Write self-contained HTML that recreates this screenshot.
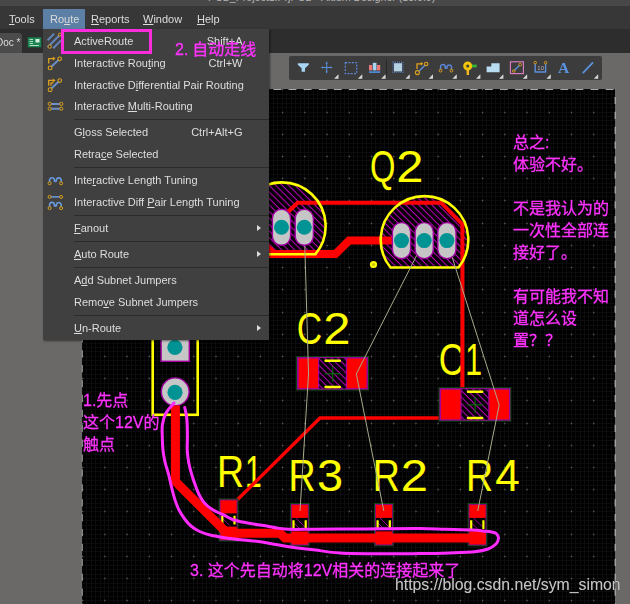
<!DOCTYPE html>
<html><head><meta charset="utf-8">
<style>
html,body{margin:0;padding:0;}
body{width:630px;height:604px;overflow:hidden;background:#6b6968;position:relative;font-family:"Liberation Sans","Noto Sans CJK SC",sans-serif;font-size:11px;color:#d8d8d8;}
.abs{position:absolute;}
#title{left:0;top:0;width:630px;height:6px;background:#484848;overflow:hidden;}
#menubar{left:0;top:6px;width:630px;height:23px;background:#373737;}
#tabbar{left:0;top:29px;width:630px;height:24px;background:#2d2d2d;}
.mb{will-change:transform;position:absolute;top:13px;height:12px;line-height:12px;font-size:11px;color:#dcdcdc;white-space:nowrap;}
.mb u,.mi u{text-decoration:underline;text-underline-offset:1px;}
#routehl{left:43px;top:9px;width:42px;height:20px;background:#5b7fa5;}
#menu{will-change:transform;left:43px;top:29px;width:225.500px;height:311px;background:#404040;box-shadow:1px 1px 2px rgba(0,0,0,.5);}
.mi{position:absolute;left:31px;height:14px;line-height:14px;font-size:11px;color:#dedede;white-space:nowrap;}
.sc{position:absolute;right:26px;height:14px;line-height:14px;font-size:11px;color:#dedede;white-space:nowrap;}
.sep{position:absolute;left:31px;width:195px;height:1px;background:#2b2b2b;}
.arr{position:absolute;left:214px;width:0;height:0;border-left:4px solid #ddd;border-top:3px solid transparent;border-bottom:3px solid transparent;}
.ann{position:absolute;color:#ff32ff;-webkit-text-stroke:0.300px #ff32ff;font-size:16px;line-height:22px;white-space:nowrap;font-family:"Liberation Sans","Noto Sans CJK SC",sans-serif;font-weight:400;will-change:transform;}
#wm{will-change:transform;position:absolute;left:395px;top:576px;font-size:15.800px;color:#c6c6c6;white-space:nowrap;font-family:"Liberation Sans",sans-serif;text-shadow:0 0 1px #333;}
</style></head><body>
<!-- PCB canvas -->
<svg class="abs" style="left:0;top:0" width="630" height="604" viewBox="0 0 630 604" xmlns="http://www.w3.org/2000/svg">
<defs>
<pattern id="hatch" width="4.6" height="4.6" patternUnits="userSpaceOnUse" patternTransform="rotate(45)"><rect width="4.6" height="4.6" fill="#000"/><rect x="0" y="0" width="4.6" height="1.1" fill="#b400b4"/></pattern>
<clipPath id="q2c"><path d="M390.5 267.5 A43.8 43.8 0 1 1 458.5 267.5 Z"/></clipPath>
<clipPath id="q1c"><path d="M248.1 254.2 A43.8 43.8 0 1 1 315.5 254.2 Z"/></clipPath>
</defs>
<rect x="82" y="89" width="533" height="515" fill="#000"/>
<path d="M82.5 89V604M86.5 89V604M91.5 89V604M95.5 89V604M100.5 89V604M104.5 89V604M108.5 89V604M113.5 89V604M117.5 89V604M122.5 89V604M126.5 89V604M131.5 89V604M135.5 89V604M140.5 89V604M144.5 89V604M148.5 89V604M153.5 89V604M157.5 89V604M162.5 89V604M166.5 89V604M171.5 89V604M175.5 89V604M180.5 89V604M184.5 89V604M188.5 89V604M193.5 89V604M197.5 89V604M202.5 89V604M206.5 89V604M211.5 89V604M215.5 89V604M220.5 89V604M224.5 89V604M228.5 89V604M233.5 89V604M237.5 89V604M242.5 89V604M246.5 89V604M251.5 89V604M255.5 89V604M260.5 89V604M264.5 89V604M268.5 89V604M273.5 89V604M277.5 89V604M282.5 89V604M286.5 89V604M291.5 89V604M295.5 89V604M300.5 89V604M304.5 89V604M308.5 89V604M313.5 89V604M317.5 89V604M322.5 89V604M326.5 89V604M331.5 89V604M335.5 89V604M340.5 89V604M344.5 89V604M348.5 89V604M353.5 89V604M357.5 89V604M362.5 89V604M366.5 89V604M371.5 89V604M375.5 89V604M380.5 89V604M384.5 89V604M388.5 89V604M393.5 89V604M397.5 89V604M402.5 89V604M406.5 89V604M411.5 89V604M415.5 89V604M420.5 89V604M424.5 89V604M428.5 89V604M433.5 89V604M437.5 89V604M442.5 89V604M446.5 89V604M451.5 89V604M455.5 89V604M460.5 89V604M464.5 89V604M468.5 89V604M473.5 89V604M477.5 89V604M482.5 89V604M486.5 89V604M491.5 89V604M495.5 89V604M500.5 89V604M504.5 89V604M508.5 89V604M513.5 89V604M517.5 89V604M522.5 89V604M526.5 89V604M531.5 89V604M535.5 89V604M540.5 89V604M544.5 89V604M548.5 89V604M553.5 89V604M557.5 89V604M562.5 89V604M566.5 89V604M571.5 89V604M575.5 89V604M580.5 89V604M584.5 89V604M588.5 89V604M593.5 89V604M597.5 89V604M602.5 89V604M606.5 89V604M611.5 89V604M82 89.5H615M82 94.5H615M82 98.5H615M82 103.5H615M82 107.5H615M82 112.5H615M82 116.5H615M82 120.5H615M82 125.5H615M82 129.5H615M82 134.5H615M82 138.5H615M82 143.5H615M82 147.5H615M82 152.5H615M82 156.5H615M82 160.5H615M82 165.5H615M82 169.5H615M82 174.5H615M82 178.5H615M82 183.5H615M82 187.5H615M82 192.5H615M82 196.5H615M82 200.5H615M82 205.5H615M82 209.5H615M82 214.5H615M82 218.5H615M82 223.5H615M82 227.5H615M82 232.5H615M82 236.5H615M82 240.5H615M82 245.5H615M82 249.5H615M82 254.5H615M82 258.5H615M82 263.5H615M82 267.5H615M82 272.5H615M82 276.5H615M82 280.5H615M82 285.5H615M82 289.5H615M82 294.5H615M82 298.5H615M82 303.5H615M82 307.5H615M82 312.5H615M82 316.5H615M82 320.5H615M82 325.5H615M82 329.5H615M82 334.5H615M82 338.5H615M82 343.5H615M82 347.5H615M82 351.5H615M82 356.5H615M82 360.5H615M82 365.5H615M82 369.5H615M82 374.5H615M82 378.5H615M82 383.5H615M82 387.5H615M82 391.5H615M82 396.5H615M82 400.5H615M82 405.5H615M82 409.5H615M82 414.5H615M82 418.5H615M82 423.5H615M82 427.5H615M82 431.5H615M82 436.5H615M82 440.5H615M82 445.5H615M82 449.5H615M82 454.5H615M82 458.5H615M82 463.5H615M82 467.5H615M82 471.5H615M82 476.5H615M82 480.5H615M82 485.5H615M82 489.5H615M82 494.5H615M82 498.5H615M82 503.5H615M82 507.5H615M82 511.5H615M82 516.5H615M82 520.5H615M82 525.5H615M82 529.5H615M82 534.5H615M82 538.5H615M82 543.5H615M82 547.5H615M82 551.5H615M82 556.5H615M82 560.5H615M82 565.5H615M82 569.5H615M82 574.5H615M82 578.5H615M82 583.5H615M82 587.5H615M82 591.5H615M82 596.5H615M82 600.5H615" stroke="#0c0c0e" stroke-width="1" fill="none" shape-rendering="crispEdges"/>
<path d="M82.0 89.5H615M82.0 112.5H615M82.0 134.5H615M82.0 156.5H615M82.0 178.5H615M82.0 200.5H615M82.0 223.5H615M82.0 245.5H615M82.0 267.5H615M82.0 289.5H615M82.0 312.5H615M82.0 334.5H615M82.0 356.5H615M82.0 378.5H615M82.0 400.5H615M82.0 423.5H615M82.0 445.5H615M82.0 467.5H615M82.0 489.5H615M82.0 511.5H615M82.0 534.5H615M82.0 556.5H615M82.0 578.5H615M82.0 600.5H615" stroke="#5c5c5c" stroke-width="1.300" stroke-dasharray="1.300 20.920" fill="none"/>
<path d="M82 89.500H615" stroke="#a8a8a8" stroke-width="1.200" stroke-dasharray="7.800 7.300" stroke-dashoffset="4.800" fill="none"/>
<path d="M615.200 89V604" stroke="#b0b0b0" stroke-width="1.200" stroke-dasharray="7.200 7.700" stroke-dashoffset="7" fill="none"/>
<path d="M82.300 89V604" stroke="#a0a0a0" stroke-width="1" stroke-dasharray="7.200 7.700" stroke-dashoffset="7" fill="none"/>

<!-- Q1 -->
<g clip-path="url(#q1c)"><rect x="230" y="180" width="100" height="80" fill="url(#hatch)"/></g>
<!-- Q2 -->
<g clip-path="url(#q2c)"><rect x="375" y="190" width="100" height="80" fill="url(#hatch)"/></g>

<!-- designators -->
<g fill="#ffff00" font-family="Liberation Sans, sans-serif" font-size="44.5">
<text transform="translate(370.05 182.3) scale(0.734 1)">Q</text>
<text transform="translate(396.34 182.3) scale(1.100 1)">2</text>
<text transform="translate(296.81 344.2) scale(0.791 1)">C</text>
<text transform="translate(323.34 344.2) scale(1.100 1)">2</text>
<text transform="translate(438.81 375.4) scale(0.791 1)">C</text>
<text transform="translate(465.30 375.4) scale(0.678 1)">1</text>
<text transform="translate(217.02 486.7) scale(0.844 1)">R</text>
<text transform="translate(244.90 486.7) scale(0.678 1)">1</text>
<text transform="translate(288.52 490.6) scale(0.844 1)">R</text>
<text transform="translate(317.01 490.6) scale(1.057 1)">3</text>
<text transform="translate(372.72 490.6) scale(0.844 1)">R</text>
<text transform="translate(400.64 490.6) scale(1.100 1)">2</text>
<text transform="translate(466.12 490.6) scale(0.844 1)">R</text>
<text transform="translate(495.19 490.6) scale(0.994 1)">4</text>
</g>
<!-- red traces -->
<g fill="none" stroke="#ff0000" stroke-linejoin="miter" stroke-linecap="butt">
<path d="M268 254H335.500L349.100 240.500H395" stroke-width="8"/>
<path d="M268 243.400L276 251H268Z" fill="#ff0000" stroke="none"/>
<path d="M286.500 213.500L297.500 202.700H441L462.400 224.300V389" stroke-width="4"/>
<path d="M442 418H320L229 508" stroke-width="3.4"/>
</g>

<!-- Q outlines -->
<path d="M390.5 267.5 A43.8 43.8 0 1 1 458.5 267.5 Z" fill="none" stroke="#ffff00" stroke-width="2.600"/>
<path d="M248.1 254.2 A43.8 43.8 0 1 1 315.5 254.2 Z" fill="none" stroke="#ffff00" stroke-width="2.600"/>
<circle cx="373.5" cy="264.5" r="3.6" fill="#ffff00"/><circle cx="373.5" cy="264.5" r="1.6" fill="#c8c800"/>

<!-- C2 -->
<g>
<rect x="296.1" y="356.1" width="72.800" height="34.400" fill="#0e4a0e"/>
<rect x="297.1" y="357.1" width="70.800" height="32.400" fill="#a000a0"/>
<rect x="319.2" y="358.1" width="26.600" height="30.400" fill="url(#hatch)"/>
<rect x="298.7" y="358.6" width="19.300" height="29.600" fill="#ff0000"/>
<rect x="347.0" y="358.6" width="19.500" height="29.600" fill="#ff0000"/>
<path d="M324.7 373.8H340.7M332.7 365.8V381.8" stroke="#007a00" stroke-width="1" fill="none"/>
<path d="M325.6 360.7H339.8M325.6 387.0H339.8" stroke="#ffff00" stroke-width="2.500" stroke-linecap="round" fill="none"/>
</g>
<!-- C1 -->
<g>
<rect x="438.5" y="387.2" width="72.800" height="34.400" fill="#0e4a0e"/>
<rect x="439.5" y="388.2" width="70.800" height="32.400" fill="#a000a0"/>
<rect x="461.6" y="389.2" width="26.600" height="30.400" fill="url(#hatch)"/>
<rect x="441.1" y="389.7" width="19.300" height="29.600" fill="#ff0000"/>
<rect x="489.4" y="389.7" width="19.500" height="29.600" fill="#ff0000"/>
<path d="M467.1 404.9H483.1M475.1 396.9V412.9" stroke="#007a00" stroke-width="1" fill="none"/>
<path d="M468.0 391.8H482.2M468.0 418.1H482.2" stroke="#ffff00" stroke-width="2.500" stroke-linecap="round" fill="none"/>
</g>
<!-- Resistors -->
<g>
<rect x="218.7" y="498.5" width="19.800" height="43.0" fill="#0e4a0e"/>
<rect x="219.7" y="499.5" width="17.800" height="41.0" fill="#8a008a"/>
<rect x="220.6" y="512.5" width="16" height="15.0" fill="#000"/>
<path d="M224.7 513.5L233.7 522.5M221.7 517.5L229.7 525.5" stroke="#a000a0" stroke-width="1" fill="none"/>
<rect x="220.6" y="500.4" width="16" height="13" fill="#ff0000"/>
<rect x="220.6" y="526.6" width="16" height="13" fill="#ff0000"/>
<path d="M222.3 515.8V524.5M234.5 515.8V524.5" stroke="#ffff00" stroke-width="2.200" fill="none"/>
<rect x="289.9" y="503.0" width="19.800" height="43.3" fill="#0e4a0e"/>
<rect x="290.9" y="504.0" width="17.800" height="41.3" fill="#8a008a"/>
<rect x="291.8" y="517.0" width="16" height="15.3" fill="#000"/>
<path d="M295.9 518.0L304.9 527.0M292.9 522.0L300.9 530.0" stroke="#a000a0" stroke-width="1" fill="none"/>
<rect x="291.8" y="504.9" width="16" height="13" fill="#ff0000"/>
<rect x="291.8" y="531.4" width="16" height="13" fill="#ff0000"/>
<path d="M293.5 520.3V529.0M305.7 520.3V529.0" stroke="#ffff00" stroke-width="2.200" fill="none"/>
<rect x="374.0" y="503.0" width="19.800" height="43.3" fill="#0e4a0e"/>
<rect x="375.0" y="504.0" width="17.800" height="41.3" fill="#8a008a"/>
<rect x="375.9" y="517.0" width="16" height="15.3" fill="#000"/>
<path d="M380.0 518.0L389.0 527.0M377.0 522.0L385.0 530.0" stroke="#a000a0" stroke-width="1" fill="none"/>
<rect x="375.9" y="504.9" width="16" height="13" fill="#ff0000"/>
<rect x="375.9" y="531.4" width="16" height="13" fill="#ff0000"/>
<path d="M377.6 520.3V529.0M389.8 520.3V529.0" stroke="#ffff00" stroke-width="2.200" fill="none"/>
<rect x="467.6" y="503.0" width="19.800" height="43.3" fill="#0e4a0e"/>
<rect x="468.6" y="504.0" width="17.800" height="41.3" fill="#8a008a"/>
<rect x="469.5" y="517.0" width="16" height="15.3" fill="#000"/>
<path d="M473.6 518.0L482.6 527.0M470.6 522.0L478.6 530.0" stroke="#a000a0" stroke-width="1" fill="none"/>
<rect x="469.5" y="504.9" width="16" height="13" fill="#ff0000"/>
<rect x="469.5" y="531.4" width="16" height="13" fill="#ff0000"/>
<path d="M471.2 520.3V529.0M483.4 520.3V529.0" stroke="#ffff00" stroke-width="2.200" fill="none"/>
</g>
<!-- ratsnest -->
<g fill="none" stroke="#aaaa8c" stroke-width="1">
<path d="M304.300 227.300L308.500 374L300 511"/>
<path d="M424.2 240.600L356.300 374L383.800 511"/>
<path d="M446.900 240.600L499.200 405L477.700 511"/>
</g>
<!-- pads Q2 -->
<g fill="#c6c6c6" stroke="#a000a0" stroke-width="1.400">
<rect x="392.40" y="222.60" width="18.200" height="36" rx="9.100"/>
<rect x="415.10" y="222.60" width="18.200" height="36" rx="9.100"/>
<rect x="437.80" y="222.60" width="18.200" height="36" rx="9.100"/>
<rect x="272.40" y="209.30" width="18.200" height="36" rx="9.100"/>
<rect x="295.20" y="209.30" width="18.200" height="36" rx="9.100"/>
</g>
<g fill="#009393">
<circle cx="401.5" cy="240.6" r="7.500"/><circle cx="424.2" cy="240.6" r="7.500"/><circle cx="446.9" cy="240.6" r="7.500"/><circle cx="281.5" cy="227.3" r="7.500"/><circle cx="304.3" cy="227.3" r="7.500"/>
</g>

<!-- J1 -->
<rect x="152.700" y="300" width="45" height="114.800" fill="none" stroke="#ffff00" stroke-width="2.600"/>
<rect x="161.100" y="333.100" width="28.200" height="28.200" fill="#c6c6c6" stroke="#a000a0" stroke-width="1.400"/>
<circle cx="174.900" cy="347.300" r="7.600" fill="#009393"/>
<circle cx="175.200" cy="391.800" r="13.900" fill="#c6c6c6" stroke="#a000a0" stroke-width="1.400"/>
<circle cx="175" cy="392.300" r="7.600" fill="#009393"/>

<path d="M175.400 405.500V481.500L227.200 533.300H280L285 538H486" stroke="#ff0000" stroke-width="9" fill="none" stroke-linejoin="miter"/>



<!-- hand drawn magenta -->
<path d="M174.0 403.0C172.7 404.7 167.9 409.4 166.0 413.0C164.1 416.6 163.0 420.8 162.4 424.8C161.8 428.8 162.2 432.9 162.3 437.0C162.4 441.1 162.5 445.4 162.9 449.6C163.3 453.8 164.1 457.9 165.0 462.0C165.9 466.1 167.5 470.2 168.6 474.4C169.7 478.6 170.5 482.9 171.5 487.0C172.5 491.1 173.6 495.5 174.8 499.3C176.1 503.1 177.3 506.7 179.0 510.0C180.7 513.3 182.7 516.3 184.7 519.0C186.7 521.7 188.5 523.9 191.0 526.0C193.5 528.1 196.3 530.0 199.6 531.5C202.9 533.0 206.9 534.3 211.0 535.3C215.1 536.3 219.1 536.9 224.4 537.7C229.7 538.5 236.7 539.3 243.0 540.0C249.3 540.7 256.5 541.2 262.0 542.0C267.5 542.8 271.5 543.7 276.0 544.5C280.5 545.3 284.7 546.0 289.0 546.7C293.3 547.4 297.6 548.0 302.0 548.5C306.4 549.0 309.2 549.2 315.5 550.0C321.8 550.8 329.2 552.4 340.0 553.0C350.8 553.6 366.7 553.7 380.0 553.8C393.3 553.9 408.3 553.7 420.0 553.6C431.7 553.5 440.9 553.3 450.0 553.0C459.1 552.7 468.4 552.5 474.7 551.8C481.0 551.1 484.4 550.3 488.0 549.0C491.6 547.7 494.2 545.8 496.0 544.0C497.8 542.2 498.4 539.7 498.5 538.0C498.6 536.3 497.4 534.8 496.5 533.8C495.6 532.8 495.1 532.7 492.8 532.2C490.6 531.7 486.5 531.4 483.0 531.0C479.5 530.6 478.0 530.3 471.7 530.0C465.4 529.7 453.6 529.4 445.0 529.2C436.4 529.0 430.8 528.7 420.0 528.6C409.2 528.5 393.3 528.7 380.0 528.8C366.7 528.9 351.3 528.9 340.0 529.0C328.7 529.1 320.5 529.2 312.0 529.3C303.5 529.3 294.8 529.5 289.0 529.3C283.2 529.1 280.7 528.5 277.0 528.0C273.3 527.5 270.9 526.7 266.7 526.0C262.5 525.3 256.8 524.6 252.0 523.8C247.2 523.0 241.4 521.9 237.8 521.0C234.2 520.1 232.7 519.4 230.5 518.5C228.3 517.6 226.5 516.4 224.4 515.4C222.3 514.4 220.1 513.5 218.0 512.5C215.9 511.5 213.8 510.4 212.0 509.2C210.2 508.0 208.4 506.8 207.0 505.5C205.6 504.2 204.6 503.5 203.3 501.7C202.0 499.9 200.2 497.0 199.0 494.5C197.8 492.0 197.0 489.7 195.9 486.8C194.8 483.9 193.5 480.3 192.5 477.0C191.5 473.7 190.4 470.2 189.7 467.0C188.9 463.8 188.4 460.9 188.0 458.0C187.6 455.1 187.3 453.1 187.2 449.6C187.1 446.1 187.4 441.1 187.4 437.0C187.4 432.9 187.3 428.3 187.2 424.8C187.0 421.3 186.9 418.9 186.5 416.0C186.1 413.1 185.0 408.8 184.7 407.4" fill="none" stroke="#ff2cff" stroke-width="3" stroke-linecap="round" stroke-linejoin="round"/>
</svg>

<!-- toolbar -->
<div class="abs" style="left:289px;top:56px;width:313px;height:23.500px;background:#3c3c3c;border-radius:2px;"></div>

<!-- annotations -->
<div class="ann" style="left:512.500px;top:132px;">总之:<br>体验不好。<br><br>不是我认为的<br>一次性全部连<br>接好了。<br><br>有可能我不知<br>道怎么设<br>置？？</div>
<div class="ann" style="left:83px;top:389.500px;">1.先点<br>这个12V的<br>触点</div>
<div class="ann" style="left:190px;top:560px;">3. 这个先自动将12V相关的连接起来了</div>
<div id="wm">https://blog.csdn.net/sym_simon</div>

<!-- chrome -->
<div id="title" class="abs"><div style="position:absolute;left:208px;top:-9px;font-size:10.600px;line-height:12px;color:#b4b4b4;white-space:nowrap;">PCB_Project1.PrjPCB - Altium Designer (18.0.9)</div></div>
<div id="menubar" class="abs"></div>
<div id="tabbar" class="abs"></div>
<div id="routehl" class="abs"></div>
<div class="mb" style="left:9px;"><u>T</u>ools</div>
<div class="mb" style="left:50px;">Ro<u>u</u>te</div>
<div class="mb" style="left:91px;"><u>R</u>eports</div>
<div class="mb" style="left:143px;"><u>W</u>indow</div>
<div class="mb" style="left:197px;"><u>H</u>elp</div>
<div class="abs" style="left:0;top:33px;width:22px;height:20px;background:#4b4b4b;border-radius:0 3px 0 0;"></div>
<div class="mb" style="left:-4px;top:37px;font-size:10px;">Doc *</div>

<div id="menu" class="abs">
<div class="mi" style="top:5px;">ActiveRoute</div><div class="sc" style="top:5px;">Shift+A</div>
<div class="mi" style="top:27px;">Interactive Rou<u>t</u>ing</div><div class="sc" style="top:27px;">Ctrl+W</div>
<div class="mi" style="top:49px;">Interactive D<u>i</u>fferential Pair Routing</div>
<div class="mi" style="top:70px;">Interactive <u>M</u>ulti-Routing</div>
<div class="sep" style="top:90px;"></div>
<div class="mi" style="top:96px;">G<u>l</u>oss Selected</div><div class="sc" style="top:96px;">Ctrl+Alt+G</div>
<div class="mi" style="top:118px;">Retra<u>c</u>e Selected</div>
<div class="sep" style="top:138px;"></div>
<div class="mi" style="top:144px;">Inte<u>r</u>active Length Tuning</div>
<div class="mi" style="top:166px;">Interactive Diff <u>P</u>air Length Tuning</div>
<div class="sep" style="top:186px;"></div>
<div class="mi" style="top:192px;"><u>F</u>anout</div><div class="arr" style="top:196px;"></div>
<div class="sep" style="top:212px;"></div>
<div class="mi" style="top:218px;"><u>A</u>uto Route</div><div class="arr" style="top:222px;"></div>
<div class="sep" style="top:238px;"></div>
<div class="mi" style="top:244px;">A<u>d</u>d Subnet Jumpers</div>
<div class="mi" style="top:266px;">Remo<u>v</u>e Subnet Jumpers</div>
<div class="sep" style="top:286px;"></div>
<div class="mi" style="top:292px;"><u>U</u>n-Route</div><div class="arr" style="top:296px;"></div>
</div>

<!-- icon overlay -->
<svg class="abs" style="left:0;top:0" width="630" height="604" viewBox="0 0 630 604" xmlns="http://www.w3.org/2000/svg">
<!-- toolbar icons -->
<g id="tb">
<path d="M297.800 63.300H308.800V64.800L305 68.300V71.800H301.600V68.300L297.800 64.800Z" fill="#a9d4f2"/>
<path d="M322 67.500H331.500M326.700 62.800V72.200" stroke="#5b8fdc" stroke-width="1" fill="none"/>
<path d="M326.700 61.500L328 63.500H325.400ZM326.700 73.500L328 71.500H325.400ZM321 67.500L323 66.200V68.800ZM332.500 67.500L330.500 66.200V68.800Z" fill="#5b8fdc"/>
<rect x="345.300" y="62.600" width="11.400" height="11" fill="none" stroke="#5b86d8" stroke-width="1.200" stroke-dasharray="2 1.300"/>
<rect x="369" y="65" width="3.200" height="5.400" fill="#f07878"/><rect x="377" y="65" width="3.200" height="5.400" fill="#f07878"/><rect x="372.800" y="62.800" width="3.700" height="7.600" fill="#a9d4f2"/><rect x="369" y="71.300" width="11.200" height="1.600" fill="#4f8fe6"/>
<rect x="386" y="59.500" width="1" height="17" fill="#262626"/>
<rect x="393" y="62.200" width="10" height="10.200" fill="none" stroke="#5b86d8" stroke-width="1.200" stroke-dasharray="1 1" opacity="0.800"/>
<rect x="394" y="63.200" width="8" height="8.200" fill="#b4d2e4"/>
<path d="M417.600 72.400L426 64.200" stroke="#5b8fdc" stroke-width="1.400"/>
<path d="M417 69V63.800H421.500" stroke="#e0a21e" stroke-width="1.300" fill="none"/><path d="M420.800 61.800L423.400 63.800L420.800 65.800Z" fill="#e0a21e"/>
<circle cx="426.200" cy="63.900" r="1.700" fill="#3b3b3b" stroke="#e0a21e" stroke-width="1.100"/><circle cx="417.400" cy="72.600" r="2" fill="#3b3b3b" stroke="#e0a21e" stroke-width="1.100"/>
<path d="M440.600 70V66.700A2.300 2.300 0 0 1 445.200 66.700V68A1.500 1.500 0 0 0 447 68V66.700A2.300 2.300 0 0 1 451.500 66.700V70" stroke="#5b86d8" stroke-width="1.500" fill="none"/>
<circle cx="440.600" cy="70.600" r="1.400" fill="#3b3b3b" stroke="#e0a21e" stroke-width="1"/><circle cx="451.500" cy="70.600" r="1.400" fill="#3b3b3b" stroke="#e0a21e" stroke-width="1"/>
<rect x="471.500" y="64.600" width="5.300" height="2.800" fill="#35b535"/>
<rect x="466.600" y="69.500" width="2.400" height="5.500" fill="#f0b820"/>
<circle cx="467.700" cy="66" r="3" fill="none" stroke="#f2c40c" stroke-width="3"/>
<path d="M486.600 72.200V66.400H491.300V63.300H499.600V72.200Z" fill="#b8dcf0"/>
<rect x="510.400" y="61.800" width="13" height="11.800" fill="none" stroke="#e27fc8" stroke-width="1.100"/>
<path d="M514 70.800L520 64.800" stroke="#5b8fdc" stroke-width="1.400"/><circle cx="513.800" cy="71" r="1.300" fill="#3b3b3b" stroke="#e0a21e" stroke-width="0.900"/><circle cx="520.200" cy="64.600" r="1.300" fill="#3b3b3b" stroke="#e0a21e" stroke-width="0.900"/>
<path d="M535.200 63.500V72H545.600V63.500" stroke="#5b8fdc" stroke-width="1.400" fill="none"/>
<circle cx="535.200" cy="62.600" r="1.300" fill="#3b3b3b" stroke="#e0a21e" stroke-width="0.900"/><circle cx="545.600" cy="62.600" r="1.300" fill="#3b3b3b" stroke="#e0a21e" stroke-width="0.900"/>
<text x="537.300" y="70.300" font-family="Liberation Sans, sans-serif" font-size="6" fill="#b0b0b0">10</text>
<text x="558" y="73.300" font-family="Liberation Serif, serif" font-weight="bold" font-size="15.500" fill="#5b93e0">A</text>
<path d="M582.800 73.200L593 62.400" stroke="#5b93e0" stroke-width="1.700"/>
<path d="M338.500 78.800h-4.2v-0.3l3.9 -3.9h0.3zM362.300 78.800h-4.2v-0.3l3.9 -3.9h0.3zM385.600 78.800h-4.2v-0.3l3.9 -3.9h0.3zM409.800 78.800h-4.2v-0.3l3.9 -3.9h0.3zM433 78.800h-4.2v-0.3l3.9 -3.9h0.3zM456.800 78.800h-4.2v-0.3l3.9 -3.9h0.3zM480.400 78.800h-4.2v-0.3l3.9 -3.9h0.3zM503.400 78.800h-4.2v-0.3l3.9 -3.9h0.3zM527.200 78.800h-4.2v-0.3l3.9 -3.9h0.3zM550.800 78.800h-4.2v-0.3l3.9 -3.9h0.3zM598.200 78.800h-4.2v-0.3l3.9 -3.9h0.3z" fill="#d6d6d6"/>
</g>
<!-- menu icons -->
<g id="mic">
<path d="M47.600 40.200L54.200 33.600M47.600 47.200L61 33.800M53.200 48.200L61 40.400" stroke="#6484bc" stroke-width="2" fill="none"/>
<circle cx="49.700" cy="46.600" r="1.700" fill="#404040" stroke="#dca21e" stroke-width="1"/><circle cx="59.800" cy="34.600" r="1.500" fill="#404040" stroke="#dca21e" stroke-width="1"/>
<g id="ir">
<path d="M50.500 67.500L59.300 59.200" stroke="#6b8fc8" stroke-width="1.900"/>
<path d="M48.700 63.500V58.600H53.500" stroke="#dca21e" stroke-width="1.300" fill="none"/><path d="M52.800 56.500L55.500 58.600L52.800 60.700Z" fill="#dca21e"/>
<circle cx="59.700" cy="58.800" r="1.800" fill="#404040" stroke="#dca21e" stroke-width="1.100"/><circle cx="50.100" cy="67.900" r="1.900" fill="#404040" stroke="#dca21e" stroke-width="1.100"/>
</g>
<g transform="translate(0 21.800)">
<path d="M50.500 67.500L59.300 59.200" stroke="#6b8fc8" stroke-width="1.900"/>
<path d="M48.700 64V58.600H53.500M51 64V61H53.500" stroke="#dca21e" stroke-width="1.300" fill="none"/><path d="M52.800 56.500L55.500 58.600L52.800 60.700Z" fill="#dca21e"/>
<circle cx="59.700" cy="58.800" r="1.800" fill="#404040" stroke="#dca21e" stroke-width="1.100"/><circle cx="50.100" cy="67.900" r="1.900" fill="#404040" stroke="#dca21e" stroke-width="1.100"/>
</g>
<path d="M51 103.900H60M51 108.700H60" stroke="#6b8fc8" stroke-width="2"/>
<g fill="#404040" stroke="#dca21e" stroke-width="1"><circle cx="49.700" cy="103.900" r="1.600"/><circle cx="61.300" cy="103.900" r="1.600"/><circle cx="49.700" cy="108.700" r="1.600"/><circle cx="61.300" cy="108.700" r="1.600"/></g>
<path d="M49.600 182.500V179.500A2.500 2.500 0 0 1 54.400 179.500V181A1.300 1.300 0 0 0 56.400 181V179.500A2.500 2.500 0 0 1 61.100 179.500V182.500" stroke="#6b9be0" stroke-width="1.600" fill="none"/>
<g fill="#404040" stroke="#dca21e" stroke-width="1"><circle cx="49.600" cy="183.300" r="1.500"/><circle cx="61.100" cy="183.300" r="1.500"/></g>
<path d="M51 196.900H60" stroke="#6b9be0" stroke-width="1.500"/>
<path d="M49.600 207.300V204.200A2.500 2.500 0 0 1 54.400 204.200V205.700A1.300 1.300 0 0 0 56.400 205.700V204.200A2.500 2.500 0 0 1 61.100 204.200V207.300" stroke="#6b9be0" stroke-width="1.600" fill="none"/>
<g fill="#404040" stroke="#dca21e" stroke-width="1"><circle cx="49.600" cy="196.900" r="1.500"/><circle cx="61.100" cy="196.900" r="1.500"/><circle cx="49.600" cy="208.100" r="1.500"/><circle cx="61.100" cy="208.100" r="1.500"/></g>
</g>
<!-- tab icon -->
<rect x="27.800" y="37.300" width="13.500" height="10" fill="#1a8350"/>
<rect x="35.500" y="39" width="4" height="3.500" fill="#d8f0e0"/>
<path d="M29.500 39.500H33M29.500 41.500H33M29.500 43.500H33M29.500 45.500H39" stroke="#bfe8cf" stroke-width="0.900"/>
</svg>
<div class="abs" style="left:61px;top:29px;width:85px;height:18.500px;border:3px solid #fb2cdc;"></div>
<div class="ann" style="left:174.800px;top:39.300px;word-spacing:-0.500px;">2. 自动走线</div>
</body></html>
